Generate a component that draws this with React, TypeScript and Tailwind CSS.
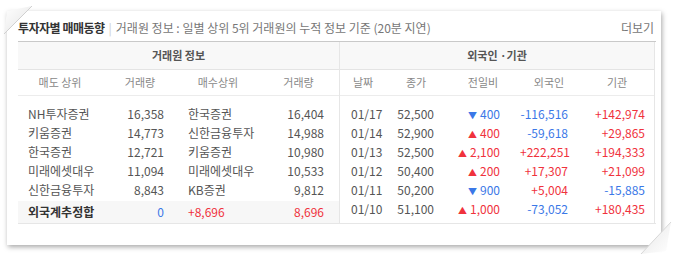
import React from "react";

const brokers = [
  { sell: "NH투자증권", sellVol: "16,358", buy: "한국증권", buyVol: "16,404" },
  { sell: "키움증권", sellVol: "14,773", buy: "신한금융투자", buyVol: "14,988" },
  { sell: "한국증권", sellVol: "12,721", buy: "키움증권", buyVol: "10,980" },
  { sell: "미래에셋대우", sellVol: "11,094", buy: "미래에셋대우", buyVol: "10,533" },
  { sell: "신한금융투자", sellVol: "8,843", buy: "KB증권", buyVol: "9,812" },
];

type Day = { date: string; close: string; up: boolean; diff: string; foreign: string; inst: string };

const days: Day[] = [
  { date: "01/17", close: "52,500", up: false, diff: "400", foreign: "-116,516", inst: "+142,974" },
  { date: "01/14", close: "52,900", up: true, diff: "400", foreign: "-59,618", inst: "+29,865" },
  { date: "01/13", close: "52,500", up: true, diff: "2,100", foreign: "+222,251", inst: "+194,333" },
  { date: "01/12", close: "50,400", up: true, diff: "200", foreign: "+17,307", inst: "+21,099" },
  { date: "01/11", close: "50,200", up: false, diff: "900", foreign: "+5,004", inst: "-15,885" },
  { date: "01/10", close: "51,100", up: true, diff: "1,000", foreign: "-73,052", inst: "+180,435" },
];

const tone = (v: string) => (v.startsWith("-") ? "text-[#3b78e7]" : "text-[#f0323c]");

const App = () => {
  return (
    <div
      className="relative w-[673px] h-[256px] bg-white overflow-hidden"
      style={{ fontFamily: '"Noto Sans CJK KR", "Noto Sans", sans-serif' }}
    >
      <div className="relative ml-[7px] mt-[11px] w-[654px] h-[234px] bg-white shadow-[1px_2px_5px_rgba(0,0,0,0.35)] pl-[11px] pr-[5px] pt-[6px]">
        {/* title */}
        <div className="flex items-center h-[22px] text-[12px] leading-none">
          <span className="font-bold text-[#333] tracking-[-0.5px]">투자자별 매매동향</span>
          <span className="mx-[4px] text-[#ccc]">|</span>
          <span className="text-[#777]">거래원 정보 : 일별 상위 5위 거래원의 누적 정보 기준 (20분 지연)</span>
          <span className="ml-auto mr-[2px] text-[#777]">더보기</span>
        </div>

        {/* table */}
        <div className="mt-[2px] flex border-t border-[#c9c9c9] border-b border-b-[#e6e6e6] text-[12px] text-[#555]">
          {/* left: 거래원 정보 */}
          <div className="w-[321px] flex flex-col">
            <div className="h-[28px] flex items-center justify-center bg-[#f8f8f8] border-b border-[#e4e4e4] text-[11px] font-bold text-[#555]">
              거래원 정보
            </div>
            <div className="h-[26px] grid grid-cols-[84px_76px_80px_81px] items-center border-b border-[#ececec] text-[11px] text-[#888] text-center">
              <span>매도 상위</span>
              <span>거래량</span>
              <span>매수상위</span>
              <span>거래량</span>
            </div>
            <div className="pt-[8px]">
              {brokers.map((b) => (
                <div key={b.sell + b.buy} className="h-[19px] grid grid-cols-[84px_76px_80px_81px] items-center">
                  <span className="pl-[10px]">{b.sell}</span>
                  <span className="text-right pr-[14px]">{b.sellVol}</span>
                  <span className="pl-[10px]">{b.buy}</span>
                  <span className="text-right pr-[15px]">{b.buyVol}</span>
                </div>
              ))}
            </div>
            <div className="mt-[2px] h-[22px] grid grid-cols-[84px_76px_80px_81px] items-center bg-[#f7f7f7]">
              <span className="pl-[10px] font-bold text-[#333]">외국계추정합</span>
              <span className="text-right pr-[14px] text-[#3b78e7]">0</span>
              <span className="pl-[10px] text-[#f0323c]">+8,696</span>
              <span className="text-right pr-[15px] text-[#f0323c]">8,696</span>
            </div>
          </div>

          {/* right: 외국인 기관 */}
          <div className="w-[316px] flex flex-col border-l border-[#e6e6e6] border-r border-r-[#e6e6e6]">
            <div className="h-[28px] flex items-center justify-center bg-[#f8f8f8] border-b border-[#e4e4e4] text-[11px] font-bold text-[#555]">
              외국인 ·기관
            </div>
            <div className="h-[26px] grid grid-cols-[46px_60px_74px_58px_78px] items-center border-b border-[#ececec] text-[11px] text-[#888] text-center">
              <span>날짜</span>
              <span>종가</span>
              <span>전일비</span>
              <span>외국인</span>
              <span>기관</span>
            </div>
            <div className="pt-[8px] pb-[5px]">
              {days.map((d) => (
                <div key={d.date} className="h-[19px] grid grid-cols-[46px_60px_74px_58px_78px] items-center">
                  <span className="pl-[11px]">{d.date}</span>
                  <span className="text-right pr-[12px]">{d.close}</span>
                  <span className={`text-right pr-[20px] ${d.up ? "text-[#f0323c]" : "text-[#3b78e7]"}`}>
                    <span className="text-[9px] mr-[3px]">{d.up ? "▲" : "▼"}</span>
                    {d.diff}
                  </span>
                  <span className={`text-right pr-[10px] ${tone(d.foreign)}`}>{d.foreign}</span>
                  <span className={`text-right pr-[11px] ${tone(d.inst)}`}>{d.inst}</span>
                </div>
              ))}
            </div>
          </div>
        </div>
      </div>

      {/* paper curl decorations */}
      <svg className="absolute left-0 top-0" width="40" height="40" viewBox="0 0 40 40">
        <defs>
          <linearGradient id="tl" x1="0" y1="0" x2="1" y2="1">
            <stop offset="0" stopColor="#ffffff" />
            <stop offset="1" stopColor="#e2e2e2" />
          </linearGradient>
        </defs>
        <polygon points="4,34 7,11 32,6" fill="url(#tl)" />
        <polyline points="4,34 32,6" stroke="#d0d0d0" strokeWidth="1" fill="none" />
      </svg>
      <svg className="absolute right-0 bottom-0" width="40" height="40" viewBox="0 0 40 40">
        <defs>
          <linearGradient id="br" x1="0" y1="0" x2="1" y2="1">
            <stop offset="0" stopColor="#e6e6e6" />
            <stop offset="1" stopColor="#ffffff" />
          </linearGradient>
        </defs>
        <polygon points="8,38 38,6 33,35" fill="url(#br)" />
        <polyline points="8,38 38,6" stroke="#d8d8d8" strokeWidth="1" fill="none" />
      </svg>
    </div>
  );
};

export default App;
